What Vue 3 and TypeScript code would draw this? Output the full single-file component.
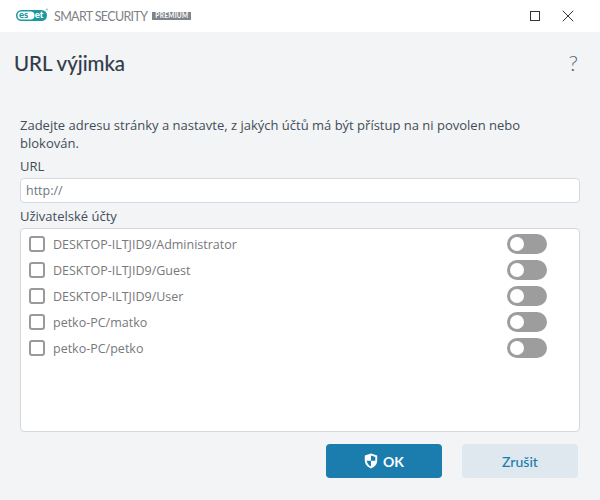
<script setup lang="ts">
const accounts: string[] = [
  'DESKTOP-ILTJID9/Administrator',
  'DESKTOP-ILTJID9/Guest',
  'DESKTOP-ILTJID9/User',
  'petko-PC/matko',
  'petko-PC/petko',
]
</script>

<template>
  <div class="window">
    <header class="titlebar">
      <div class="brand">
        <svg class="logo" width="32" height="14" viewBox="0 0 32 14">
          <rect x="0" y="2" width="31" height="11" rx="5.5" fill="#1a9a9f" />
          <rect x="1.5" y="3.5" width="17" height="8" rx="4" fill="#fff" />
          <text x="3" y="10.2" class="logo-dark">es</text>
          <text x="18.8" y="10.4" class="logo-light">et</text>
          <circle cx="31" cy="1.5" r="0.8" fill="none" stroke="#1a9a9f" stroke-width="0.4" />
        </svg>
        <span class="product">SMART SECURITY</span>
        <span class="tier">PREMIUM</span>
      </div>
      <div class="controls">
        <svg width="12" height="12" viewBox="0 0 12 12">
          <rect x="1.5" y="1.5" width="9" height="9" fill="none" stroke="#333" stroke-width="1" />
        </svg>
        <svg width="12" height="12" viewBox="0 0 12 12">
          <path d="M0.8 0.8 11.2 11.2M11.2 0.8 0.8 11.2" fill="none" stroke="#333" stroke-width="1" />
        </svg>
      </div>
    </header>

    <div class="heading">
      <h1>URL výjimka</h1>
      <span class="help">?</span>
    </div>

    <main class="content">
      <p class="intro">Zadejte adresu stránky a nastavte, z jakých účtů má být přístup na ni povolen nebo blokován.</p>
      <label class="field-label">URL</label>
      <input class="url-input" type="text" value="http://" />
      <label class="field-label users-label">Uživatelské účty</label>
      <div class="accounts">
        <div v-for="account in accounts" :key="account" class="account">
          <span class="check"></span>
          <span class="name">{{ account }}</span>
          <span class="toggle"><span class="knob"></span></span>
        </div>
      </div>
    </main>

    <footer class="actions">
      <button class="btn primary">
        <svg width="14" height="16" viewBox="0 0 14 16">
          <path d="M7 0.5 13.2 2.6V7.5C13.2 11 10.8 14 7 15.5 3.2 14 0.8 11 0.8 7.5V2.6Z" fill="#fff" />
          <path d="M7 2.6 11.3 4V7.7H7ZM7 7.7V13.4C4.6 12.2 3 10.2 2.7 7.7Z" fill="#1a7dae" />
        </svg>
        OK
      </button>
      <button class="btn secondary">Zrušit</button>
    </footer>
  </div>
</template>

<style>
html,
body {
  margin: 0;
  background: #f3f4f6;
}
</style>

<style scoped>
.window {
  width: 600px;
  height: 500px;
  display: flex;
  flex-direction: column;
  background: #f3f4f6;
  font-family: "Open Sans", "Liberation Sans", sans-serif;
  color: #424d57;
  overflow: hidden;
}
.titlebar {
  height: 32px;
  flex: none;
  display: flex;
  align-items: center;
  justify-content: space-between;
  background: #fff;
  padding: 0 26px 0 16px;
}
.brand {
  display: flex;
  align-items: center;
}
.logo {
  display: block;
  margin-top: -2px;
}
.logo-dark,
.logo-light {
  font-family: "Lato", sans-serif;
  font-size: 9.5px;
  font-weight: 900;
}
.logo-dark {
  fill: #1a9a9f;
}
.logo-light {
  fill: #fff;
}
.product {
  margin-left: 6px;
  font-family: "Lato", sans-serif;
  font-size: 12.5px;
  letter-spacing: -0.65px;
  color: #7c8288;
}
.tier {
  margin-left: 5px;
  height: 8px;
  line-height: 8px;
  padding: 0 3px;
  background: #7f858b;
  color: #fff;
  font-family: "Lato", sans-serif;
  font-size: 6.5px;
  font-weight: 700;
  letter-spacing: 0.3px;
}
.controls {
  display: flex;
  align-items: center;
  gap: 21px;
}
.controls svg {
  display: block;
}
.heading {
  height: 61px;
  flex: none;
  display: flex;
  align-items: center;
  justify-content: space-between;
  padding: 0 22px 0 14px;
}
h1 {
  margin: 0;
  font-family: "Lato", sans-serif;
  font-size: 20.5px;
  font-weight: 400;
  color: #2f3b47;
  -webkit-text-stroke: 0.2px #2f3b47;
}
.help {
  font-family: "Lato", sans-serif;
  font-size: 22px;
  font-weight: 300;
  color: #56636f;
}
.content {
  flex: 1;
  display: flex;
  flex-direction: column;
  padding: 23px 20px 0;
  min-height: 0;
}
.intro {
  margin: 0;
  font-size: 13px;
  line-height: 18px;
}
.field-label {
  font-size: 13px;
  line-height: 18px;
  margin-top: 5px;
}
.users-label {
  margin-top: 4px;
}
.url-input {
  box-sizing: border-box;
  width: 100%;
  height: 25px;
  margin-top: 3px;
  padding: 0 5px;
  border: 1px solid #d5d8dc;
  border-radius: 4px;
  background: #fff;
  font-family: inherit;
  font-size: 12.5px;
  color: #6e7881;
  outline: none;
}
.accounts {
  box-sizing: border-box;
  height: 204px;
  margin-top: 3px;
  padding-top: 2px;
  border: 1px solid #d5d8dc;
  border-radius: 4px;
  background: #fff;
}
.account {
  height: 26px;
  display: flex;
  align-items: center;
  padding: 0 32px 0 8px;
}
.check {
  box-sizing: border-box;
  width: 16px;
  height: 16px;
  flex: none;
  border: 2px solid #9a9a9a;
  border-radius: 3px;
  background: #fff;
}
.name {
  flex: 1;
  margin-left: 8px;
  font-size: 12.5px;
  color: #77797c;
}
.toggle {
  box-sizing: border-box;
  width: 40px;
  height: 20px;
  padding: 3px;
  flex: none;
  border-radius: 10px;
  background: #9d9d9d;
}
.knob {
  display: block;
  width: 14px;
  height: 14px;
  border-radius: 50%;
  background: #fff;
}
.actions {
  flex: none;
  display: flex;
  justify-content: flex-end;
  gap: 20px;
  padding: 12px 22px 22px;
}
.btn {
  width: 116px;
  height: 34px;
  border: none;
  border-radius: 4px;
  display: flex;
  align-items: center;
  justify-content: center;
  gap: 5px;
  font-family: "Lato", sans-serif;
  font-size: 14px;
  font-weight: 500;
}
.primary {
  background: #1a7dae;
  color: #fff;
  font-weight: 700;
}
.secondary {
  background: #dfe8ef;
  color: #1a7dae;
}
</style>
